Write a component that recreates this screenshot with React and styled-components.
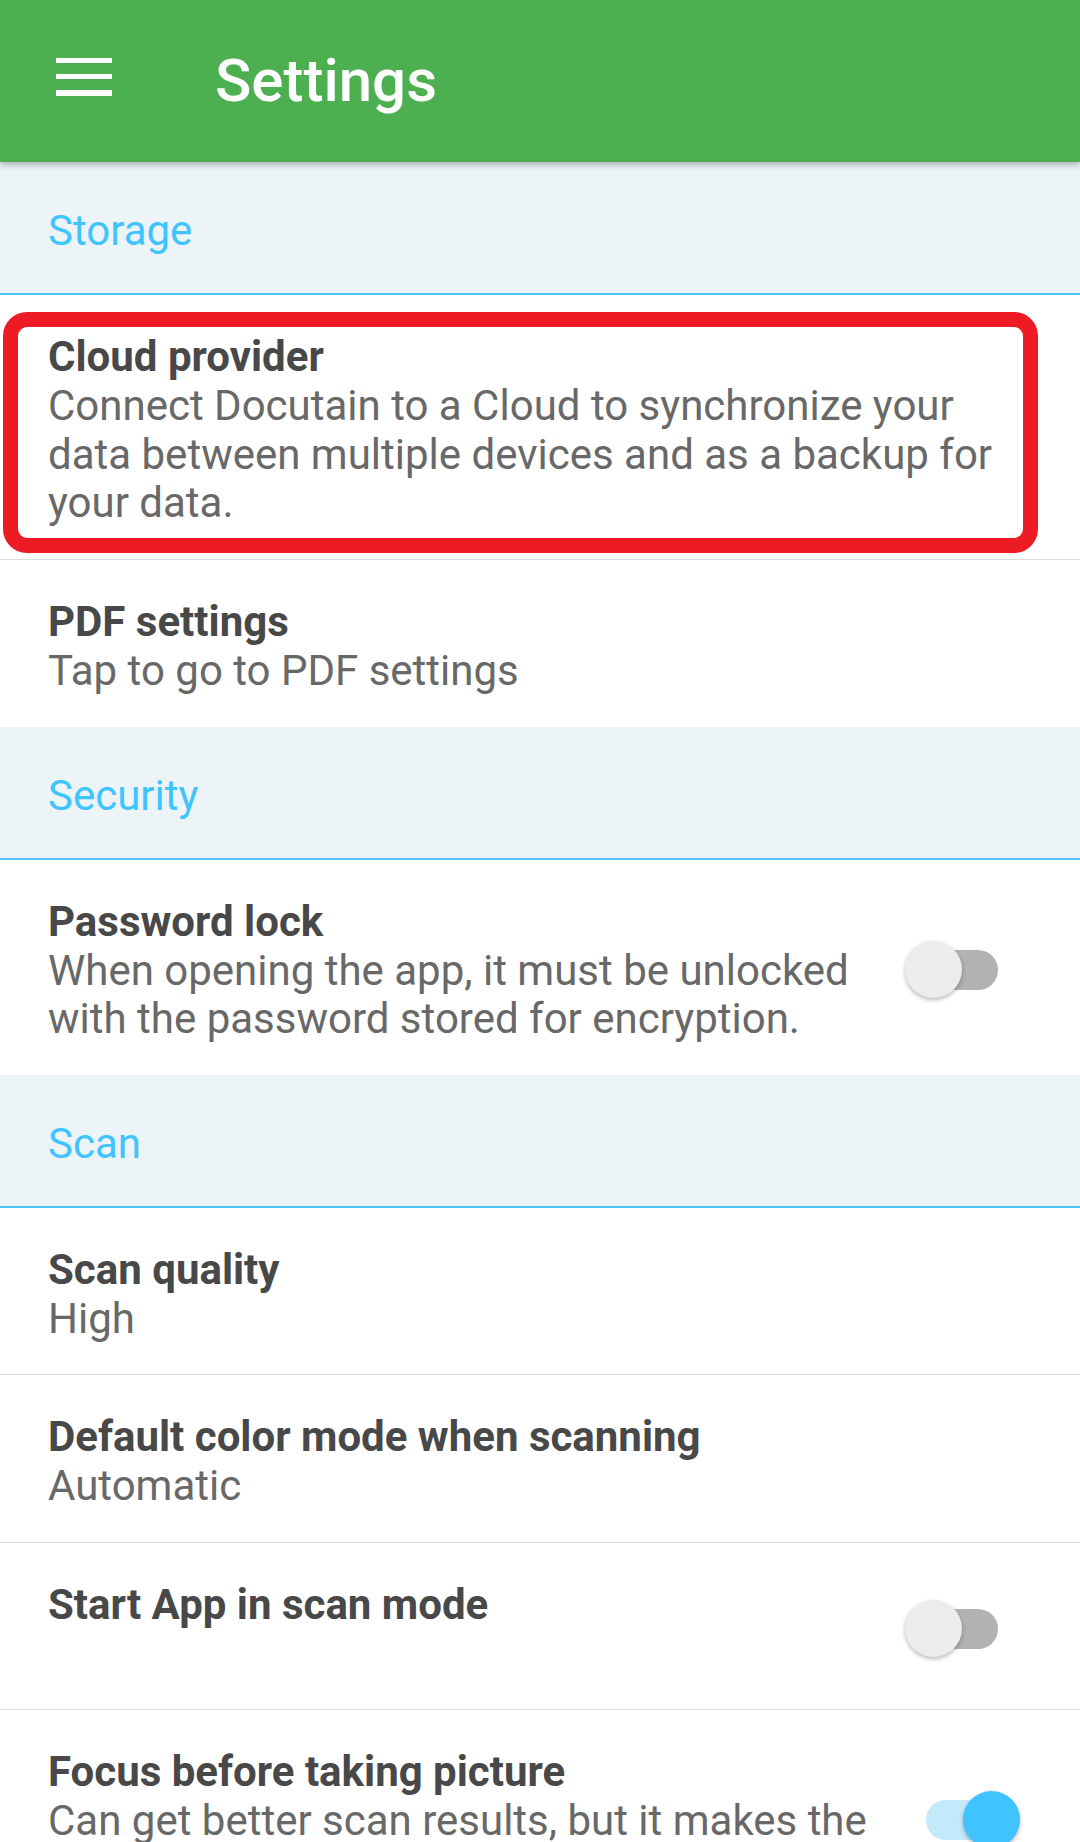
import React from "react";
import styled, { createGlobalStyle } from "styled-components";

const GlobalStyle = createGlobalStyle`
  html, body {
    margin: 0;
    padding: 0;
    overflow: hidden;
    background: #ffffff;
    font-family: Roboto, "Noto Sans", "Liberation Sans", sans-serif;
  }
`;

function Hamburger() {
  return (
    <svg width="56" height="38" viewBox="0 0 56 38">
      <rect x="0" y="0" width="56" height="5" fill="#fff" />
      <rect x="0" y="16" width="56" height="5" fill="#fff" />
      <rect x="0" y="32" width="56" height="6" fill="#fff" />
    </svg>
  );
}

function Switch({ on }) {
  return (
    <SwitchWrap>
      <Track on={on ? 1 : 0} />
      <Thumb on={on ? 1 : 0} />
    </SwitchWrap>
  );
}

function Pref({ title, summary, toggle, last, highlight }) {
  return (
    <Row last={last ? 1 : 0}>
      <TextCol>
        <Title>{title}</Title>
        {summary && <Summary>{summary}</Summary>}
      </TextCol>
      {toggle !== undefined && <Switch on={toggle} />}
      {highlight && <Highlight />}
    </Row>
  );
}

export default function App() {
  return (
    <>
      <GlobalStyle />
      <Screen>
        <Toolbar>
          <MenuButton>
            <Hamburger />
          </MenuButton>
          <ToolbarTitle>Settings</ToolbarTitle>
        </Toolbar>

        <SectionHeader>Storage</SectionHeader>
        <Pref
          title="Cloud provider"
          summary="Connect Docutain to a Cloud to synchronize your data between multiple devices and as a backup for your data."
          highlight
        />
        <Pref title="PDF settings" summary="Tap to go to PDF settings" last />

        <SectionHeader>Security</SectionHeader>
        <Pref
          title="Password lock"
          summary="When opening the app, it must be unlocked with the password stored for encryption."
          toggle={false}
          last
        />

        <SectionHeader>Scan</SectionHeader>
        <Pref title="Scan quality" summary="High" />
        <Pref title="Default color mode when scanning" summary="Automatic" />
        <Pref title="Start App in scan mode" toggle={false} />
        <Pref
          title="Focus before taking picture"
          summary="Can get better scan results, but it makes the scanning process a little slower."
          toggle={true}
          last
        />
      </Screen>
    </>
  );
}

const Screen = styled.div`
  width: 1080px;
  min-height: 1842px;
  background: #ffffff;
`;

const Toolbar = styled.div`
  position: relative;
  z-index: 2;
  height: 162px;
  background: #4caf50;
  display: flex;
  align-items: center;
  box-shadow: 0 3px 6px rgba(0, 0, 0, 0.28);
`;

const MenuButton = styled.div`
  width: 56px;
  height: 38px;
  margin-left: 56px;
  margin-right: 103px;
  margin-top: -8px;
  display: flex;
`;

const ToolbarTitle = styled.div`
  color: #ffffff;
  font-size: 60px;
  font-weight: 500;
  line-height: 70px;
`;

const SectionHeader = styled.div`
  background: #edf4f8;
  color: #40c4ff;
  font-size: 42px;
  line-height: 50px;
  padding: 44px 48px 37px;
  border-bottom: 2px solid #4fc3f7;
`;

const Row = styled.div`
  position: relative;
  display: flex;
  align-items: center;
  min-height: 167px;
  box-sizing: border-box;
  padding: 37px 55px 31px 48px;
  border-bottom: ${(p) => (p.last ? "none" : "1px solid #dcdcdc")};
`;

const TextCol = styled.div`
  flex: 1;
  align-self: flex-start;
  display: flex;
  flex-direction: column;
  padding-right: 30px;
`;

const Title = styled.div`
  color: #484848;
  font-size: 42px;
  font-weight: 700;
  line-height: 50px;
`;

const Summary = styled.div`
  color: #686868;
  font-size: 42px;
  line-height: 48.5px;
`;

const SwitchWrap = styled.div`
  position: relative;
  width: 120px;
  height: 58px;
  flex-shrink: 0;
  display: flex;
  align-items: center;
`;

const Track = styled.div`
  margin-left: ${(p) => (p.on ? "21px" : "3px")};
  width: 90px;
  height: 40px;
  border-radius: 20px;
  background: ${(p) => (p.on ? "#c3e9fb" : "#b2b2b2")};
`;

const Thumb = styled.div`
  position: absolute;
  top: 0;
  left: ${(p) => (p.on ? "58px" : "0")};
  width: 57px;
  height: 57px;
  border-radius: 50%;
  background: ${(p) => (p.on ? "#40c4ff" : "#ececec")};
  box-shadow: 0 2px 4px rgba(0, 0, 0, 0.28);
`;

const Highlight = styled.div`
  position: absolute;
  left: 3px;
  right: 42px;
  top: 17px;
  height: 241px;
  box-sizing: border-box;
  border: 15px solid #ed1c24;
  border-radius: 24px;
  pointer-events: none;
`;
